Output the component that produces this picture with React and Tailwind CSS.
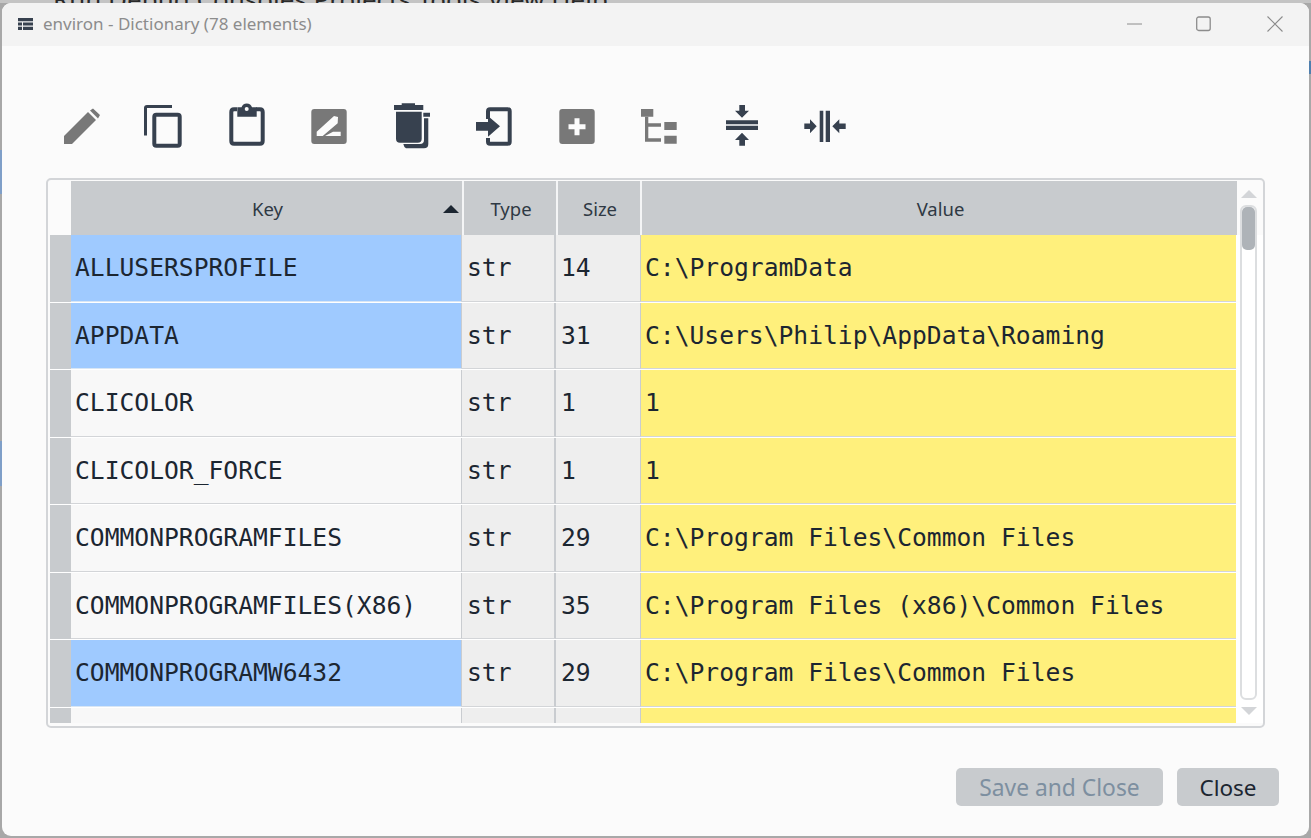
const rows = [
  ["ALLUSERSPROFILE", "14", "C:\\ProgramData", true],
  ["APPDATA", "31", "C:\\Users\\Philip\\AppData\\Roaming", true],
  ["CLICOLOR", "1", "1", false],
  ["CLICOLOR_FORCE", "1", "1", false],
  ["COMMONPROGRAMFILES", "29", "C:\\Program Files\\Common Files", false],
  ["COMMONPROGRAMFILES(X86)", "35", "C:\\Program Files (x86)\\Common Files", false],
  ["COMMONPROGRAMW6432", "29", "C:\\Program Files\\Common Files", true],
];

const DARK = "#37414f";
const GREY = "#787878";
const BG = "#fbfbfb";

function Icon({ children }) {
  return (
    <svg width="44" height="48" viewBox="0 0 44 48" className="shrink-0 block overflow-visible">
      {children}
    </svg>
  );
}

function Toolbar() {
  return (
    <div className="flex items-center h-12 pl-[60px] gap-[38px]">
      <Icon>
        <path d="M2 42V34L26 10L34 18L10 42z M28 8.500L31 6.500L38 13L36 16.500z" fill={GREY} />
      </Icon>
      <Icon>
        <path d="M1.500 33.500V6Q1.500 4.500 3 4.500H28" fill="none" stroke={DARK} strokeWidth="3" />
        <rect x="10.300" y="12.700" width="25.400" height="31" rx="2" fill="none" stroke={DARK} strokeWidth="4" />
      </Icon>
      <Icon>
        <path d="M11 7.300H8Q5.300 7.300 5.300 10V39Q5.300 41.700 8 41.700H34Q36.700 41.700 36.700 39V10Q36.700 7.300 34 7.300H30" fill="none" stroke={DARK} strokeWidth="4" />
        <path d="M11.300 5.300H15.500A5.500 5.500 0 0 1 26 5.300H30.700V14.700H11.300z" fill={DARK} />
        <circle cx="20.700" cy="7" r="2" fill={BG} />
      </Icon>
      <Icon>
        <rect x="3.300" y="7" width="35.400" height="35" rx="3" fill={GREY} />
        <path d="M8.700 34V29.700L26 14L30 15L29.700 21.300L14.700 34z M17 34L25 29.700H32.700V34z" fill={BG} />
      </Icon>
      <Icon>
        <path d="M4 3H11.700V1.300H25V3H33.300V8H4z M6 9.700H31.700V36.700Q31.700 40.700 27.700 40.700H10Q6 40.700 6 36.700z" fill={DARK} />
        <path d="M33.300 10.700H40V14.700H33.300z M34 16.300H38.300V42Q38.300 46.300 34 46.300H16Q14 45.300 13.300 42H30Q34 42 34 38z" fill={DARK} />
      </Icon>
      <Icon>
        <path d="M16 17V9.300Q16 7.300 18 7.300H35.700Q37.700 7.300 37.700 9.300V39.700Q37.700 41.700 35.700 41.700H18Q16 41.700 16 39.700V36" fill="none" stroke={DARK} strokeWidth="4" />
        <path d="M4 20H16V14L28 24.300L16 34.700V28.700H4z" fill={DARK} />
      </Icon>
      <Icon>
        <rect x="5.300" y="7" width="35.400" height="35" rx="3" fill={GREY} />
        <path d="M20.500 16.200H25.500V22.200H31.500V27.200H25.500V33.200H20.500V27.200H14.500V22.200H20.500z" fill={BG} />
      </Icon>
      <Icon>
        <path d="M5 7H17.300V14.700H5z M28.300 20H40.700V28H28.300z M28.300 33.700H40.700V41.700H28.300z" fill={GREY} />
        <path d="M9 14.700H12.300V21.300H25V24.700H12.300V36.300H25V39.700H9z" fill={GREY} />
      </Icon>
      <Icon>
        <path d="M21.300 3H27V8.700H31L24 15.700L17 8.700H21.300z M21.300 43.700H27V38H31L24 30.700L17 38H21.300z" fill={DARK} />
        <path d="M8 18.300H40V22.300H8z M8 23.700H40V28H8z" fill={DARK} />
      </Icon>
      <Icon>
        <path d="M4.300 21.600H10V17.300L16.700 24.300L10 31.300V27H4.300z M45.700 21.600H39.300V17.300L32.300 24.300L39.300 31.300V27H45.700z" fill={DARK} />
        <path d="M19.700 8.700H23.300V40H19.700z M25.700 8.700H30V40H25.700z" fill={DARK} />
      </Icon>
    </div>
  );
}

function Row({ k, type = "str", size, value, sel }) {
  const mono = "font-['DejaVu_Sans_Mono',monospace] text-[24.65px] leading-none text-[#1c2631] whitespace-pre pt-[1.5px]";
  return (
    <div className="flex h-[67.5px] shrink-0 bg-white pb-[1px]">
      <div className="w-[21px] shrink-0 bg-[#c8cbce]" />
      <div
        className={`w-[391px] shrink-0 flex items-center pl-1 border-r border-r-[#c9ccd0] border-b ${
          sel ? "bg-[#9fcaff] border-b-[#d8e6f5]" : "bg-[#f8f8f8] border-b-[#d3d5d8]"
        } ${mono}`}
      >
        {k}
      </div>
      <div className={`w-[94px] shrink-0 flex items-center pl-[5px] bg-[#eeeeee] border-r-2 border-r-[#c9ccd0] border-b border-b-[#d3d5d8] ${mono}`}>
        {type}
      </div>
      <div className={`w-[85px] shrink-0 flex items-center pl-[5px] bg-[#eeeeee] border-r border-r-[#c9ccd0] border-b border-b-[#d3d5d8] ${mono}`}>
        {size}
      </div>
      <div className={`w-[595px] shrink-0 flex items-center pl-[4px] bg-[#fff07c] border-b border-b-[#d3d5d8] ${mono}`}>
        {value}
      </div>
    </div>
  );
}

function Table() {
  const head = "h-[54px] flex items-center justify-center pt-[2px] pl-[2px] bg-[#c8cbce] text-[18.5px] text-[#2f3944] shrink-0";
  return (
    <div className="relative h-[550px] w-[1219px] ml-[44px] border-2 border-[#d3d5d8] rounded-[5px] overflow-hidden pl-[2px] pt-[1px] bg-[#fbfbfb]">
      <div className="flex pl-[21px]">
        <div className={`${head} w-[393px] relative border-r-2 border-r-[#f4f5f6]`}>
          Key
          <span className="absolute right-[3px] top-[24px] w-0 h-0 border-l-[8px] border-r-[8px] border-b-[8px] border-l-transparent border-r-transparent border-b-[#1c2631]" />
        </div>
        <div className={`${head} w-[94px] border-r-2 border-r-[#f4f5f6]`}>Type</div>
        <div className={`${head} w-[84px] border-r-2 border-r-[#f4f5f6]`}>Size</div>
        <div className={`${head} w-[595px]`}>Value</div>
      </div>
      <div className="h-[488px] overflow-hidden flex flex-col">
        {rows.map((r) => (
          <Row key={r[0]} k={r[0]} size={r[1]} value={r[2]} sel={r[3]} />
        ))}
        <Row k="" type="" size="" value="" sel={false} />
      </div>
      <div className="absolute right-[6px] top-[10px] w-[17px] h-[532px] flex flex-col items-center">
        <span className="w-0 h-0 border-l-[8px] border-r-[8px] border-b-[8px] border-l-transparent border-r-transparent border-b-[#d3d5d8]" />
        <div className="mt-[7px] w-[17px] h-[495px] shrink-0 border-2 border-[#dcdee0] rounded-[6px]">
          <div className="w-full h-[43px] rounded-[5px] bg-[#aeb3b8]" />
        </div>
        <span className="mt-[7px] w-0 h-0 border-l-[8px] border-r-[8px] border-t-[8px] border-l-transparent border-r-transparent border-t-[#d3d5d8]" />
      </div>
    </div>
  );
}

export default function App() {
  return (
    <div className="w-[1311px] h-[838px] overflow-hidden relative bg-[#a8a8a8] font-['Noto_Sans',sans-serif]">
      <div className="absolute left-0 top-0 w-full h-[3px] bg-[#c4c4c4]" />
      <div className="absolute left-[53px] top-[-16px] text-[26px] leading-[30px] text-[#2a2a2a] whitespace-pre">
        Run Debug Consoles Projects Tools View Help
      </div>
      <div className="absolute left-0 top-[150px] w-[2px] h-[44px] bg-[#7f9fc8]" />
      <div className="absolute left-0 top-[441px] w-[2px] h-[45px] bg-[#7f9fc8]" />
      <div className="absolute right-0 top-[61px] w-[2px] h-[13px] bg-[#4f7fae]" />
      <div className="absolute left-[2px] top-[3px] w-[1307px] h-[833px] rounded-[9px] overflow-hidden bg-[#fbfbfb] flex flex-col">
        <div className="h-[43px] shrink-0 bg-[#f3f3f3] flex items-center pb-[2px]">
          <svg width="15" height="12" viewBox="0 0 15 12" className="ml-[16px] mr-[10px]">
            <path d="M0 0h15v3.200H0z M0 4.400h4v3.200H0z M5 4.400h10v3.200H5z M0 8.800h4V12H0z M5 8.800h10V12H5z" fill="#37414f" />
          </svg>
          <span className="text-[17px] text-[#8c8c8c]">environ - Dictionary (78 elements)</span>
          <div className="ml-auto flex items-center">
            <svg width="16" height="16" viewBox="0 0 16 16" className="mr-[53px]"><path d="M0 8h15" stroke="#8c8c8c" strokeWidth="1" /></svg>
            <svg width="16" height="16" viewBox="0 0 16 16" className="mr-[55px]"><rect x="0.700" y="1" width="13.500" height="13.500" rx="2" fill="none" stroke="#8c8c8c" strokeWidth="1.300" /></svg>
            <svg width="16" height="16" viewBox="0 0 16 16" className="mr-[26px]"><path d="M0.500 0.500l15 15M15.500 0.500l-15 15" stroke="#8c8c8c" strokeWidth="1.100" /></svg>
          </div>
        </div>
        <div className="mt-[56px]">
          <Toolbar />
        </div>
        <div className="mt-[28px]">
          <Table />
        </div>
        <div className="flex justify-end mt-[40px] mr-[30px] gap-[14px]">
          <button className="w-[207px] h-[38px] pt-[2px] rounded-[5px] bg-[#c8cbce] text-[#7d8fa0] text-[22.800px] leading-none">Save and Close</button>
          <button className="w-[102px] h-[38px] pt-[2px] rounded-[5px] bg-[#c8cbce] text-[#1c2631] text-[22.500px] leading-none">Close</button>
        </div>
      </div>
    </div>
  );
}
